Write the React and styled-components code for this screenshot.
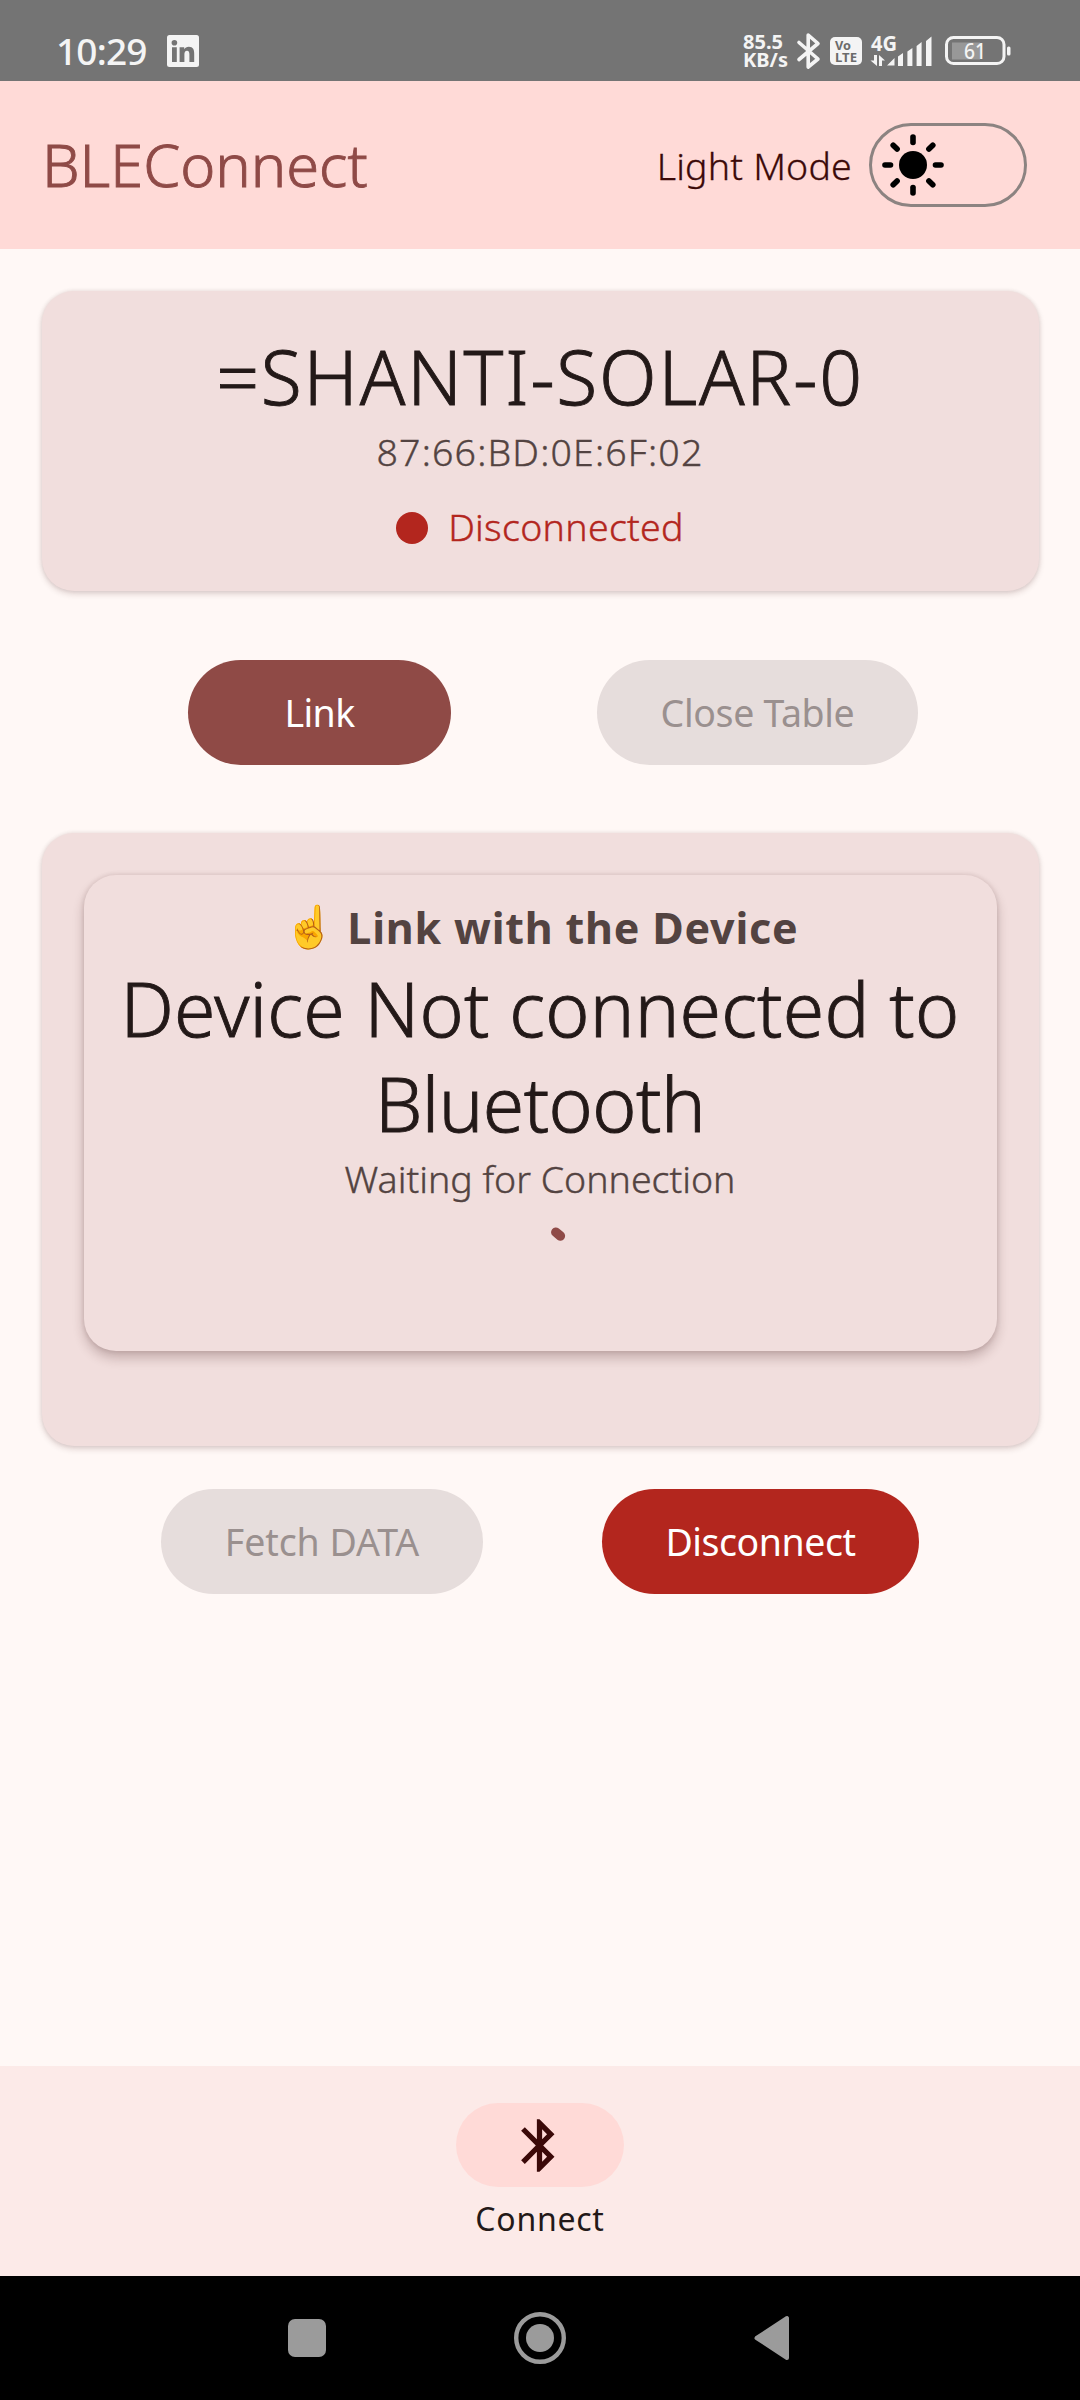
import React from "react";
import styled, { createGlobalStyle } from "styled-components";

const GlobalStyle = createGlobalStyle`
  * { box-sizing: border-box; }
  body { margin: 0; background: #fff8f6; }
`;

const Screen = styled.div`
  width: 1080px;
  height: 2400px;
  display: flex;
  flex-direction: column;
  overflow: hidden;
  background: #fff8f6;
  color: #231918;
  font-family: "Noto Sans", "Open Sans", sans-serif;
  font-weight: 300;
  white-space: nowrap;
`;

const StatusBar = styled.header`
  height: 81px;
  flex: none;
  display: flex;
  align-items: center;
  justify-content: space-between;
  padding: 21px 69px 0 56px;
  background: #747474;
  color: #f4f4f4;
`;
const StatusLeft = styled.div`
  display: flex;
  align-items: center;
  gap: 20px;
`;
const Clock = styled.span`
  font-size: 37px;
  font-weight: 500;
  line-height: 40px;
  letter-spacing: -0.8px;
`;
const StatusRight = styled.div`
  display: flex;
  align-items: center;
`;
const NetSpeed = styled.div`
  width: 54px;
  display: flex;
  flex-direction: column;
  font-size: 20px;
  font-weight: 700;
  line-height: 18px;
`;
const StatusIcon = styled.svg`
  display: block;
  flex: none;
  overflow: visible;
  margin-right: ${(p) => p.$gap || 0}px;
`;

const AppBar = styled.div`
  height: 168px;
  flex: none;
  display: flex;
  align-items: center;
  justify-content: space-between;
  padding: 0 53px 0 42px;
  background: #ffdad7;
`;
const Title = styled.h1`
  margin: 0;
  padding-bottom: 3px;
  font-size: 59.5px;
  font-weight: 300;
  line-height: 80px;
  -webkit-text-stroke: 0.9px currentColor;
  color: #8f4a47;
`;
const ModeSwitch = styled.div`
  display: flex;
  align-items: center;
  gap: 17px;
  color: #3b0908;
  font-size: 37.5px;
  letter-spacing: 0.2px;
  -webkit-text-stroke: 0.3px currentColor;
`;
const Track = styled.div`
  width: 158px;
  height: 84px;
  display: flex;
  align-items: center;
  padding-left: 9px;
  border: 3px solid #8c8381;
  border-radius: 42px;
`;

const Card = styled.section`
  width: 997px;
  margin: 0 auto;
  flex: none;
  border-radius: 32px;
  background: #f1dedd;
  box-shadow: 0 0 4px rgba(60, 20, 20, 0.1), 0 3px 6px rgba(60, 20, 20, 0.16);
`;
const DeviceCard = styled(Card)`
  height: 300px;
  margin-top: 42px;
  padding-top: 38px;
  display: flex;
  flex-direction: column;
  align-items: center;
`;
const Headline = styled.h2`
  margin: 0;
  font-size: 75px;
  font-weight: 300;
  line-height: 95px;
  letter-spacing: ${(p) => p.$spacing || 0}px;
  -webkit-text-stroke: 0.9px currentColor;
  text-align: center;
`;
const Body = styled.p`
  margin: 0;
  font-size: 37.5px;
  line-height: 56px;
  color: #534341;
  letter-spacing: ${(p) => p.$spacing || 0}px;
  -webkit-text-stroke: 0.4px currentColor;
`;
const Status = styled.div`
  display: flex;
  align-items: center;
  gap: 20px;
  margin-top: 18px;
  font-size: 37.5px;
  line-height: 57px;
  letter-spacing: 0.3px;
  -webkit-text-stroke: 0.4px currentColor;
  color: #b3261e;
`;
const Dot = styled.span`
  width: 32px;
  height: 32px;
  margin-top: 3px;
  border-radius: 50%;
  background: #b3261e;
`;

const ButtonRow = styled.div`
  flex: none;
  display: flex;
  gap: ${(p) => p.$gap}px;
  padding-left: ${(p) => p.$left}px;
  margin: ${(p) => p.$margin};
`;
const tones = {
  primary: ["#8f4a46", "#ffffff"],
  danger: ["#b3261e", "#ffffff"],
  disabled: ["#e6dddc", "#9a908f"],
};
const Button = styled.button`
  width: ${(p) => p.$width}px;
  height: 105px;
  padding: 0;
  border: 0;
  border-radius: 53px;
  background: ${(p) => tones[p.$tone][0]};
  color: ${(p) => tones[p.$tone][1]};
  font-family: inherit;
  font-size: 37.5px;
  font-weight: 400;
  line-height: 52px;
  letter-spacing: ${(p) => p.$spacing || 0}px;
`;

const Panel = styled(Card)`
  height: 613px;
  padding: 42px 42px 0;
`;
const InnerCard = styled.div`
  height: 476px;
  padding-top: 19px;
  display: flex;
  flex-direction: column;
  align-items: center;
  border-radius: 32px;
  background: #f1dedd;
  box-shadow: 0 0 5px rgba(60, 20, 20, 0.14), 0 7px 12px rgba(60, 20, 20, 0.24);
`;
const Hint = styled.div`
  display: flex;
  align-items: center;
  gap: 11px;
  padding-left: 3px;
  font-size: 43px;
  font-weight: 700;
  line-height: 67px;
  letter-spacing: 0.8px;
  color: #534341;
`;
const Emoji = styled.span`
  font-family: "Noto Color Emoji", sans-serif;
  font-size: 41px;
`;

const Spacer = styled.div`
  flex: 1;
`;
const BottomNav = styled.nav`
  height: 210px;
  flex: none;
  display: flex;
  flex-direction: column;
  align-items: center;
  padding-top: 37px;
  background: #fceae8;
`;
const Pill = styled.div`
  width: 168px;
  height: 84px;
  display: flex;
  align-items: center;
  justify-content: center;
  padding-right: 1px;
  border-radius: 42px;
  background: #ffdad7;
  color: #3b0908;
`;
const NavLabel = styled.span`
  margin-top: 10px;
  font-size: 32px;
  font-weight: 400;
  line-height: 44px;
  letter-spacing: 0.75px;
`;
const SystemNav = styled.div`
  height: 124px;
  flex: none;
  display: flex;
  align-items: center;
  justify-content: center;
  gap: 188px;
  padding-right: 3px;
  background: #000;
  color: #9b9b9b;
`;

function Sun() {
  const rays = [0, 45, 90, 135, 180, 225, 270, 315];
  return (
    <svg width="64" height="64" viewBox="-32 -32 64 64">
      <circle r="14" />
      {rays.map((a) => (
        <path key={a} d="M0 -22.5V-28" stroke="#000" strokeWidth="5.6" strokeLinecap="round" transform={`rotate(${a})`} />
      ))}
    </svg>
  );
}

export default function App() {
  return (
    <Screen>
      <GlobalStyle />
      <StatusBar>
        <StatusLeft>
          <Clock>10:29</Clock>
          <StatusIcon width="32" height="32" viewBox="0 0 32 32">
            <rect width="32" height="32" rx="2.5" fill="#f4f4f4" />
            <g fill="#747474">
              <circle cx="7.4" cy="7.8" r="2.8" />
              <path d="M5 12.2h4.8V27H5zM12.6 12.2h4.6v2c.8-1.4 2.5-2.4 4.6-2.4 4.4 0 5.4 2.9 5.4 6.9V27h-4.8v-7.4c0-1.8-.3-3.8-2.4-3.8s-2.6 1.8-2.6 3.7V27h-4.8z" />
            </g>
          </StatusIcon>
        </StatusLeft>
        <StatusRight>
          <NetSpeed>
            <span>85.5</span>
            <span>KB/s</span>
          </NetSpeed>
          <StatusIcon $gap={9} width="24" height="36" viewBox="0 0 24 36" fill="none" stroke="#f4f4f4" strokeWidth="3.6" strokeLinejoin="round" strokeLinecap="round">
            <path d="M2 9.5 21 26 11.2 34V2L21 10.5 2 26.5" />
          </StatusIcon>
          <StatusIcon $gap={8} width="32" height="28" viewBox="0 0 32 28" fontFamily="Noto Sans" fontWeight="700" fill="#6b6b6b">
            <rect width="32" height="28" rx="5" fill="#f4f4f4" />
            <text x="5" y="13" fontSize="12.5" textLength="16" lengthAdjust="spacingAndGlyphs">Vo</text>
            <text x="5" y="24.5" fontSize="12.5" textLength="22" lengthAdjust="spacingAndGlyphs">LTE</text>
          </StatusIcon>
          <StatusIcon $gap={13} width="62" height="34" viewBox="0 0 62 34" fill="#f4f4f4">
            <text x="1" y="17" fontFamily="Noto Sans" fontWeight="700" fontSize="22" textLength="26" lengthAdjust="spacingAndGlyphs">4G</text>
            <path d="M4 21h3v11L0.500 26.500H4zM9 32V21l6 5.500h-3V32z" />
            <path d="M17 31.500 24.500 24v7.500zM28 22.500l5-3.500v13h-5zM37.400 17.500l5-3.500V32h-5zM46.600 12l5-4v24h-5zM56 7l5.500-4.500V32H56z" />
          </StatusIcon>
          <StatusIcon width="66" height="30" viewBox="0 0 66 30">
            <rect x="7" y="6.500" width="28" height="17" fill="#989898" />
            <rect x="1.500" y="1.500" width="57.500" height="26" rx="7" fill="none" stroke="#f4f4f4" strokeWidth="3" />
            <rect x="62" y="10.500" width="3.500" height="9" rx="1.500" fill="#f4f4f4" />
            <text x="19" y="22.500" fontFamily="Noto Sans" fontWeight="500" fontSize="22" textLength="22" lengthAdjust="spacingAndGlyphs" fill="#f4f4f4">61</text>
          </StatusIcon>
        </StatusRight>
      </StatusBar>

      <AppBar>
        <Title>BLEConnect</Title>
        <ModeSwitch>
          <span>Light Mode</span>
          <Track>
            <Sun />
          </Track>
        </ModeSwitch>
      </AppBar>

      <DeviceCard>
        <Headline $spacing={1.81}>=SHANTI-SOLAR-0</Headline>
        <Body $spacing={1.17}>87:66:BD:0E:6F:02</Body>
        <Status>
          <Dot />
          <span>Disconnected</span>
        </Status>
      </DeviceCard>

      <ButtonRow $left={188} $gap={146} $margin="69px 0 68px">
        <Button $tone="primary" $width={263} $spacing={-0.6}>Link</Button>
        <Button $tone="disabled" $width={321} $spacing={-0.35}>Close Table</Button>
      </ButtonRow>

      <Panel>
        <InnerCard>
          <Hint>
            <Emoji>☝️</Emoji>
            <span>Link with the Device</span>
          </Hint>
          <Headline $spacing={0.22}>Device Not connected to</Headline>
          <Headline $spacing={-0.56}>Bluetooth</Headline>
          <Body>Waiting for Connection</Body>
          <svg width="80" height="60" viewBox="0 0 80 60">
            <path d="M55.800 25.200 60.400 29" stroke="#8f4a47" strokeWidth="9.500" strokeLinecap="round" />
          </svg>
        </InnerCard>
      </Panel>

      <ButtonRow $left={161} $gap={119} $margin="43px 0 0">
        <Button $tone="disabled" $width={322} $spacing={-0.08}>Fetch DATA</Button>
        <Button $tone="danger" $width={317} $spacing={-0.47}>Disconnect</Button>
      </ButtonRow>
      <Spacer />

      <BottomNav>
        <Pill>
          <svg width="63" height="63" viewBox="0 0 24 24" fill="currentColor">
            <path d="M17.710 7.710 12 2h-1v7.590L6.410 5 5 6.410 10.590 12 5 17.590 6.410 19 11 14.410V22h1l5.710-5.710L13.410 12l4.300-4.290zM13 5.830l1.880 1.880L13 9.590V5.830zm1.880 10.460L13 18.170v-3.760l1.880 1.880z" />
          </svg>
        </Pill>
        <NavLabel>Connect</NavLabel>
      </BottomNav>

      <SystemNav>
        <svg width="38" height="44" viewBox="0 0 38 44" fill="currentColor">
          <rect y="3" width="38" height="38" rx="7" />
        </svg>
        <svg width="52" height="52" viewBox="0 0 52 52" fill="currentColor">
          <circle cx="26" cy="26" r="23.800" fill="none" stroke="currentColor" strokeWidth="4.400" />
          <circle cx="26" cy="26" r="14" />
        </svg>
        <svg width="36" height="46" viewBox="0 0 36 46" fill="currentColor" stroke="currentColor" strokeWidth="4" strokeLinejoin="round">
          <path d="M2.500 23 33 3v40z" />
        </svg>
      </SystemNav>
    </Screen>
  );
}
